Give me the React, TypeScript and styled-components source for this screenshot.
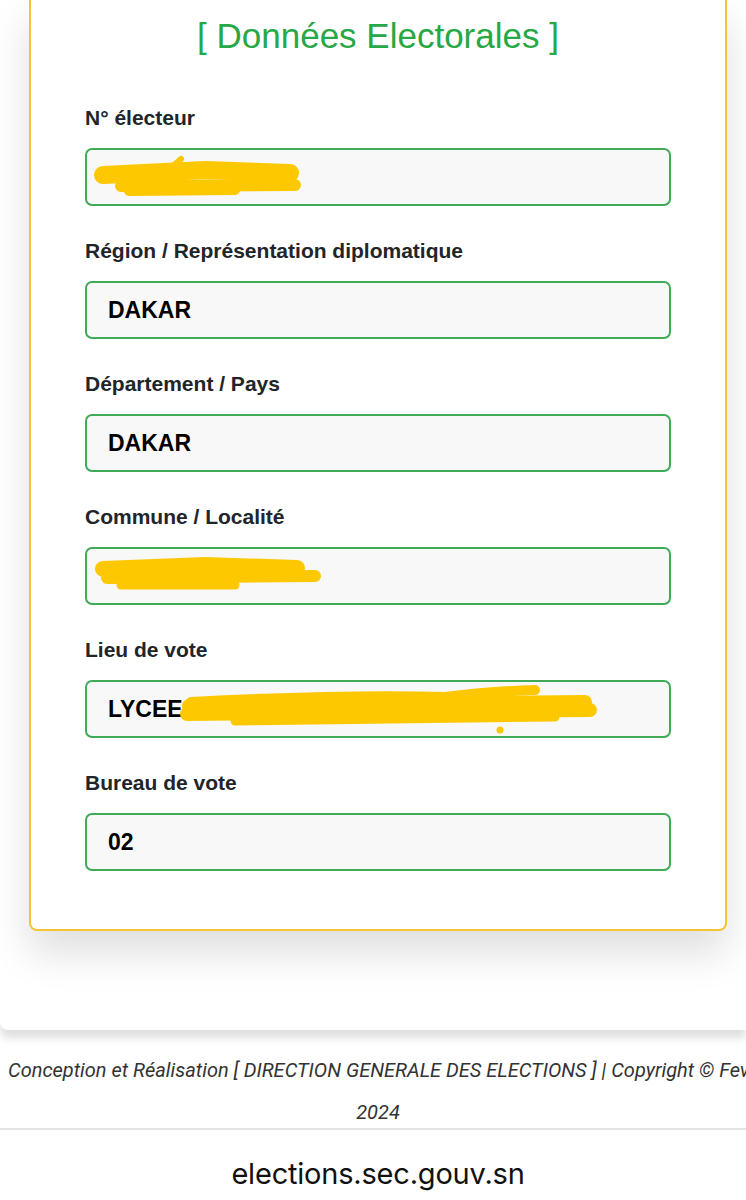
import React from "react";
import styled, { createGlobalStyle } from "styled-components";

const GlobalStyle = createGlobalStyle`
  html, body {
    margin: 0;
    padding: 0;
    background: #ffffff;
  }
  body {
    width: 746px;
    height: 1200px;
    overflow: hidden;
    font-family: "Liberation Sans", Arial, sans-serif;
  }
`;

type Mark = "id" | "commune" | "lieu";

type Field = {
  label: string;
  value: string;
  mark?: Mark;
};

const fields: Field[] = [
  { label: "N° électeur", value: "", mark: "id" },
  { label: "Région / Représentation diplomatique", value: "DAKAR" },
  { label: "Département / Pays", value: "DAKAR" },
  { label: "Commune / Localité", value: "", mark: "commune" },
  { label: "Lieu de vote", value: "LYCEE S", mark: "lieu" },
  { label: "Bureau de vote", value: "02" },
];

// yellow felt-pen strokes hiding personal data, coords relative to the input
const strokes: Record<Mark, { d: string; w: number }[]> = {
  id: [
    { d: "M18 27 L120 22 L205 25", w: 18 },
    { d: "M36 38 L210 37", w: 12 },
    { d: "M44 43 L150 42", w: 10 },
    { d: "M88 18 L96 11", w: 6 },
  ],
  commune: [
    { d: "M18 22 L120 18 L212 21", w: 16 },
    { d: "M22 31 L230 29", w: 12 },
    { d: "M36 38 L150 38", w: 9 },
  ],
  lieu: [
    { d: "M106 22 Q 260 14 360 17 Q 410 11 450 10", w: 10 },
    { d: "M104 26 L500 22", w: 14 },
    { d: "M102 34 L505 30", w: 14 },
    { d: "M150 41 L470 37", w: 9 },
  ],
};

const Scribble = ({ mark }: { mark: Mark }) => (
  <Overlay viewBox="0 0 586 58" width="586" height="58">
    {strokes[mark].map((s, i) => (
      <path
        key={i}
        d={s.d}
        stroke="#fdc800"
        strokeWidth={s.w}
        strokeLinecap="round"
        strokeLinejoin="round"
        fill="none"
      />
    ))}
    {mark === "lieu" && <circle cx="415" cy="50" r="3.5" fill="#fdc800" />}
  </Overlay>
);

export default function App() {
  return (
    <>
      <GlobalStyle />
      <Page>
        <Panel>
          <Card>
            <Title>[ Données Electorales ]</Title>
            <Form>
              {fields.map((f) => (
                <Group key={f.label}>
                  <Label>{f.label}</Label>
                  <Input>
                    <Value>{f.value}</Value>
                    {f.mark && <Scribble mark={f.mark} />}
                  </Input>
                </Group>
              ))}
            </Form>
          </Card>
        </Panel>
        <Footer>
          <FooterLine>
            Conception et Réalisation [ DIRECTION GENERALE DES ELECTIONS ] | Copyright © Fevrier
          </FooterLine>
          <FooterYear>2024</FooterYear>
        </Footer>
        <AddressBar>elections.sec.gouv.sn</AddressBar>
      </Page>
    </>
  );
}

const Page = styled.div`
  display: flex;
  flex-direction: column;
  width: 746px;
  height: 1200px;
  overflow: hidden;
`;

const Panel = styled.div`
  background: #ffffff;
  padding: 0 19px 99px 29px;
  border-bottom-left-radius: 8px;
  box-shadow: 0 8px 9px rgba(0, 0, 0, 0.13);
  position: relative;
  z-index: 1;
`;

const Card = styled.div`
  background: #ffffff;
  border: 2px solid #f3c437;
  border-top: none;
  border-radius: 0 0 8px 8px;
  padding: 14px 54px 58px;
  box-shadow: 0 22px 40px rgba(0, 0, 0, 0.13);
`;

const Title = styled.h2`
  margin: 0;
  font-family: "Liberation Sans", Arial, sans-serif;
  font-weight: 400;
  font-size: 35px;
  line-height: 44px;
  color: #28a745;
  text-align: center;
`;

const Form = styled.div`
  display: flex;
  flex-direction: column;
  gap: 33px;
  margin-top: 48px;
`;

const Group = styled.div`
  display: flex;
  flex-direction: column;
  gap: 18px;
`;

const Label = styled.label`
  font-size: 21px;
  font-weight: 700;
  line-height: 24px;
  color: #212529;
`;

const Input = styled.div`
  position: relative;
  display: flex;
  align-items: center;
  height: 58px;
  box-sizing: border-box;
  padding: 0 21px;
  border: 2px solid #3fab58;
  border-radius: 7px;
  background: #f8f8f8;
`;

const Value = styled.span`
  font-size: 23px;
  font-weight: 700;
  color: #000000;
`;

const Overlay = styled.svg`
  position: absolute;
  left: -2px;
  top: -2px;
  pointer-events: none;
`;

const Footer = styled.div`
  display: flex;
  flex-direction: column;
  padding-top: 28px;
  height: 98px;
  box-sizing: border-box;
  font-family: Roboto, "Liberation Sans", sans-serif;
  font-style: italic;
  font-size: 20px;
  color: #333333;
`;

const FooterLine = styled.div`
  white-space: nowrap;
  padding-left: 8px;
  line-height: 24px;
`;

const FooterYear = styled.div`
  text-align: center;
  padding-left: 10px;
  line-height: 24px;
  margin-top: 18px;
`;

const AddressBar = styled.div`
  flex: 1;
  border-top: 2px solid #e4e4e4;
  display: flex;
  justify-content: center;
  padding: 26px 0 0 10px;
  font-family: Inter, "Liberation Sans", sans-serif;
  font-size: 29px;
  color: #111111;
  letter-spacing: -0.2px;
`;
